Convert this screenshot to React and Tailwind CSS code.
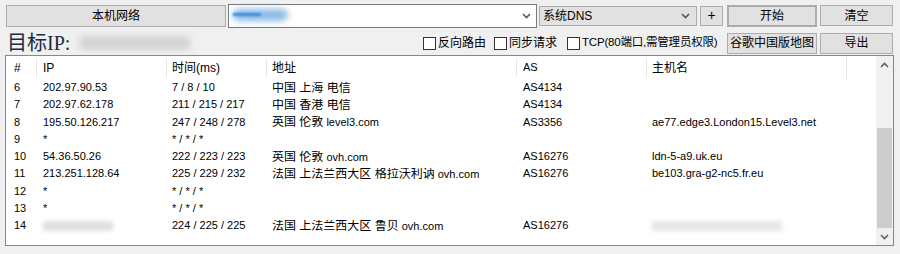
import React from "react";

const rows = [
  { n: 6, ip: "202.97.90.53", t: "7 / 8 / 10", zh: "中国 上海 电信", en: "", as: "AS4134", host: "" },
  { n: 7, ip: "202.97.62.178", t: "211 / 215 / 217", zh: "中国 香港 电信", en: "", as: "AS4134", host: "" },
  { n: 8, ip: "195.50.126.217", t: "247 / 248 / 278", zh: "英国 伦敦", en: "level3.com", as: "AS3356", host: "ae77.edge3.London15.Level3.net" },
  { n: 9, ip: "*", t: "* / * / *", zh: "", en: "", as: "", host: "" },
  { n: 10, ip: "54.36.50.26", t: "222 / 223 / 223", zh: "英国 伦敦", en: "ovh.com", as: "AS16276", host: "ldn-5-a9.uk.eu" },
  { n: 11, ip: "213.251.128.64", t: "225 / 229 / 232", zh: "法国 上法兰西大区 格拉沃利讷", en: "ovh.com", as: "AS16276", host: "be103.gra-g2-nc5.fr.eu" },
  { n: 12, ip: "*", t: "* / * / *", zh: "", en: "", as: "", host: "" },
  { n: 13, ip: "*", t: "* / * / *", zh: "", en: "", as: "", host: "" },
  { n: 14, ip: null, t: "224 / 225 / 225", zh: "法国 上法兰西大区 鲁贝", en: "ovh.com", as: "AS16276", host: null },
];

const cols = "grid-cols-[30px_130px_100px_250px_130px_200px_1fr]";
const btn = "flex items-center justify-center border border-[#adadad] bg-[#e1e1e1] text-[12px] text-black";

function Check({ label, className }) {
  return (
    <label className={`flex items-center gap-[2px] ${className || ""}`}>
      <span className="h-[13px] w-[13px] shrink-0 border border-[#333] bg-white" />
      <span className="whitespace-nowrap">{label}</span>
    </label>
  );
}

function Chevron({ up, className }) {
  return (
    <svg width="9" height="6" viewBox="0 0 9 6" className={className}>
      <path d={up ? "M1 5 L4.5 1.5 L8 5" : "M1 1 L4.5 4.5 L8 1"} fill="none" stroke="currentColor" strokeWidth="1.6" />
    </svg>
  );
}

export default function App() {
  return (
    <div
      className="h-[254px] w-[900px] overflow-hidden bg-[#f0f0f0] text-black"
      style={{ fontFamily: '"Liberation Sans", "Noto Sans CJK SC", sans-serif' }}
    >
      <div className="flex h-[31px] items-center pl-[6px]">
        <div className={`${btn} h-[22px] w-[220px]`}>本机网络</div>
        <div className="relative ml-[2px] flex h-[24px] w-[309px] items-center justify-end border border-[#7a7a7a] bg-white pr-[5px] text-[#555]">
          <span className="absolute left-[4px] top-[4px] h-[12px] w-[55px] rounded-full bg-[#8cbbe6] blur-[3px]" />
          <span className="absolute left-[4px] top-[8px] h-[3px] w-[28px] bg-[#3f8ad8] blur-[1px]" />
          <Chevron />
        </div>
        <div className="ml-[2px] flex h-[20px] w-[158px] items-center justify-between border border-[#acacac] bg-[#e1e1e1] pl-[3px] pr-[6px] text-[12px] text-[#555]">
          <span className="text-black">系统DNS</span>
          <Chevron />
        </div>
        <div className={`${btn} ml-[3px] h-[20px] w-[23px] text-[14px]`}>+</div>
        <div className={`${btn} ml-[4px] h-[22px] w-[90px] border-2 border-[#0078d7]`}>开始</div>
        <div className={`${btn} ml-[3px] h-[21px] w-[73px]`}>清空</div>
      </div>

      <div className="flex h-[24px] items-center pl-[7px]">
        <span
          className="text-[20px] leading-none text-[#202a44]"
          style={{ fontFamily: '"Liberation Serif", "Noto Sans CJK SC", serif' }}
        >
          目标IP:
        </span>
        <span className="ml-[10px] h-[14px] w-[110px] bg-[#d4d4d4] blur-[3px]" />
        <div className="ml-auto flex items-center pr-[7px]">
          <Check label="反向路由" className="w-[71px] text-[12px]" />
          <Check label="同步请求" className="w-[73px] text-[12px]" />
          <Check label="TCP(80端口,需管理员权限)" className="w-[160px] text-[11.5px] tracking-[-0.2px]" />
          <div className="flex gap-[3px]">
            <div className={`${btn} h-[21px] w-[90px]`}>谷歌中国版地图</div>
            <div className={`${btn} h-[21px] w-[73px]`}>导出</div>
          </div>
        </div>
      </div>

      <div className="ml-[5px] flex h-[191px] w-[889px] border border-[#828790] bg-white">
        <div className="flex-1">
          <div className={`grid ${cols} h-[23px] items-center text-[12px]`}>
            <div className="pl-[8px]">#</div>
            <div className="border-l border-[#e5e5e5] pl-[6px]">IP</div>
            <div className="border-l border-[#e5e5e5] pl-[5px]">时间(ms)</div>
            <div className="border-l border-[#e5e5e5] pl-[5px]">地址</div>
            <div className="border-l border-[#e5e5e5] pl-[6px] text-[11px]">AS</div>
            <div className="border-l border-[#e5e5e5] pl-[5px]">主机名</div>
            <div className="h-full border-l border-[#e5e5e5]" />
          </div>
          {rows.map((r) => (
            <div key={r.n} className={`grid ${cols} h-[17.25px] items-center text-[11px] leading-none`}>
              <div className="pl-[8px]">{r.n}</div>
              <div className="pl-[7px]">
                {r.ip === null ? <span className="block h-[10px] w-[70px] bg-[#e0e0e0] blur-[2px]" /> : r.ip}
              </div>
              <div className="pl-[6px]">{r.t}</div>
              <div className="truncate pl-[6px]">
                <span className="text-[12px]">{r.zh}</span>
                {r.en && <span> {r.en}</span>}
              </div>
              <div className="pl-[7px]">{r.as}</div>
              <div className="pl-[6px]">
                {r.host === null ? <span className="block h-[10px] w-[130px] bg-[#e6e6e6] blur-[2px]" /> : r.host}
              </div>
              <div />
            </div>
          ))}
        </div>
        <div className="flex w-[17px] flex-col bg-[#f0f0f0] text-[#606060]">
          <div className="flex h-[17px] items-center justify-center"><Chevron up /></div>
          <div className="h-[55px]" />
          <div className="mx-[1px] h-[100px] bg-[#cdcdcd]" />
          <div className="flex flex-1 items-center justify-center"><Chevron /></div>
        </div>
      </div>
    </div>
  );
}
